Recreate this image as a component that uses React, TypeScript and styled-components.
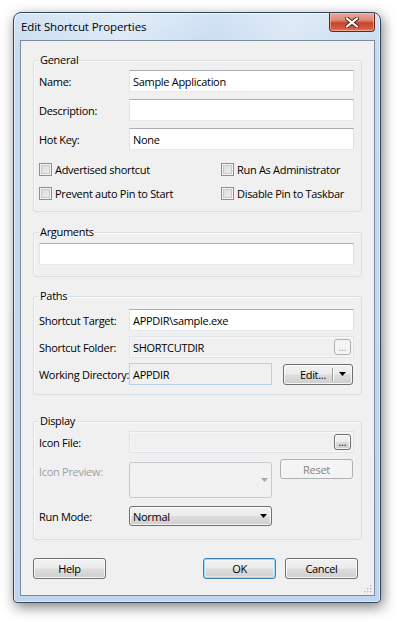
import React from 'react';
import styled, { createGlobalStyle, css } from 'styled-components';

const Global = createGlobalStyle`
  html, body { margin: 0; padding: 0; background: #ffffff; }
  body {
    font-family: "Open Sans", "Noto Sans", sans-serif;
    font-size: 11px;
    letter-spacing: -0.3px;
    line-height: 15px;
    color: #000;
  }
  * { box-sizing: border-box; }
`;

const Stage = styled.div`
  width: 400px;
  height: 622px;
  padding: 12px 0 0 13px;
`;

const Window = styled.div`
  position: relative;
  width: 368px;
  height: 591px;
  display: flex;
  flex-direction: column;
  border: 1px solid #34465c;
  border-radius: 8px 8px 4px 4px;
  background: linear-gradient(to bottom, #d3e3f4 0px, #c6dbf1 40px, #bdd5ee 100%);
  box-shadow: 2px 4px 13px rgba(0, 0, 0, 0.5), inset 0 0 0 1px rgba(255, 255, 255, 0.55);
  padding: 0 5px 6px 6px;
`;

const TitleBar = styled.div`
  height: 27px;
  display: flex;
  justify-content: space-between;
  align-items: flex-start;
  margin: 0 -5px 0 -6px;
  padding: 0 5px 0 6px;
  border-radius: 7px 7px 0 0;
  background: linear-gradient(100deg, rgba(255,255,255,0.0) 0%, rgba(255,255,255,0.35) 30%, rgba(255,255,255,0.0) 55%, rgba(255,255,255,0.3) 75%, rgba(255,255,255,0) 100%);
`;

const Title = styled.div`
  font-size: 11.5px;
  letter-spacing: -0.1px;
  line-height: 27px;
  padding-left: 1px;
  color: #000;
`;

const CloseButton = styled.div`
  width: 46px;
  height: 19px;
  display: flex;
  align-items: center;
  justify-content: center;
  border: 1px solid #6b2218;
  border-top: none;
  border-radius: 0 0 4px 4px;
  background: linear-gradient(to bottom, #e9a899 0%, #dc8a78 40%, #c9452d 55%, #d35a3f 85%, #e6836a 100%);
  box-shadow: inset 0 0 0 1px rgba(255, 200, 180, 0.55);
`;

const Client = styled.div`
  position: relative;
  flex: 1;
  display: flex;
  flex-direction: column;
  background: #f0f0f0;
  border: 1px solid #7d8a9b;
  padding: 0 12px;
`;

const Group = styled.fieldset<{ $top: number; $pt: number; $pb: number }>`
  margin: ${(p) => p.$top}px 0 0 0;
  padding: ${(p) => p.$pt}px 7px ${(p) => p.$pb}px 5px;
  border: 1px solid #d5dfe5;
  border-radius: 3px;
  box-shadow: inset 1px 1px 0 #fbfbfb;
  min-width: 0;
`;

const Legend = styled.legend`
  padding: 0 1px;
  margin-left: 0;
  font-size: 11px;
  line-height: 16px;
  color: #000;
`;

const Stack = styled.div<{ $gap: number }>`
  display: flex;
  flex-direction: column;
  gap: ${(p) => p.$gap}px;
`;

const FormRow = styled.div<{ $cols?: string; $align?: string; $mt?: number }>`
  display: grid;
  grid-template-columns: ${(p) => p.$cols ?? '90px 1fr'};
  align-items: ${(p) => p.$align ?? 'center'};
  margin-top: ${(p) => p.$mt ?? 0}px;
`;

const Label = styled.span<{ $disabled?: boolean; $pt?: number }>`
  color: ${(p) => (p.$disabled ? '#a0a0a0' : '#000')};
  white-space: nowrap;
  overflow: hidden;
  padding-top: ${(p) => p.$pt ?? 0}px;
`;

type FieldVariant = 'normal' | 'disabled' | 'readonly';

const Field = styled.div<{ $variant?: FieldVariant; $h?: number }>`
  height: ${(p) => p.$h ?? 22}px;
  display: flex;
  align-items: center;
  justify-content: space-between;
  padding: 0 2px 0 3px;
  white-space: nowrap;
  overflow: hidden;
  ${(p) =>
    p.$variant === 'disabled'
      ? css`
          background: #f0f0f0;
          border: 1px solid #dde3e8;
          box-shadow: inset 0 0 0 1px #f7f7f7;
        `
      : p.$variant === 'readonly'
      ? css`
          background: #f0f0f0;
          border: 1px solid #b6d0ea;
        `
      : css`
          background: #ffffff;
          border: 1px solid;
          border-color: #abadb3 #dbdfe6 #e3e9ef #e2e3ea;
        `}
`;

const buttonFace = css`
  border: 1px solid #707070;
  border-radius: 3px;
  background: linear-gradient(to bottom, #f2f2f2 0%, #ebebeb 48%, #dddddd 52%, #cfcfcf 100%);
  box-shadow: inset 0 0 0 1px rgba(255, 255, 255, 0.75);
`;

const disabledFace = css`
  border: 1px solid #adb2b5;
  border-radius: 3px;
  background: #f4f4f4;
  color: #838383;
`;

const PushButton = styled.div<{ $default?: boolean; $disabled?: boolean; $w?: number; $h?: number; $ml?: number }>`
  width: ${(p) => p.$w ?? 73}px;
  height: ${(p) => p.$h ?? 21}px;
  margin-left: ${(p) => p.$ml ?? 0}px;
  display: flex;
  align-items: center;
  justify-content: center;
  color: #000;
  ${(p) => (p.$disabled ? disabledFace : buttonFace)}
  ${(p) =>
    p.$default &&
    css`
      border-color: #3c7fb1;
      box-shadow: inset 0 0 0 1px #9edcfb, inset 0 0 0 2px rgba(255, 255, 255, 0.4);
    `}
`;

const MiniButton = styled.div<{ $disabled?: boolean }>`
  width: 17px;
  height: 16px;
  flex: none;
  display: flex;
  align-items: flex-end;
  justify-content: center;
  font-size: 10px;
  line-height: 12px;
  letter-spacing: 0;
  padding-bottom: 1px;
  ${(p) => (p.$disabled ? disabledFace : buttonFace)}
  color: ${(p) => (p.$disabled ? '#9a9a9a' : '#000')};
`;

const SplitButton = styled.div`
  width: 70px;
  height: 21px;
  margin-left: 11px;
  display: flex;
  align-items: center;
  ${buttonFace}
`;

const SplitMain = styled.span`
  flex: 1;
  text-align: right;
  padding-right: 6px;
`;

const SplitDivider = styled.span`
  width: 1px;
  height: 13px;
  background: #9a9a9a;
  box-shadow: 1px 0 0 #fff;
`;

const SplitArrow = styled.span`
  width: 19px;
  display: flex;
  justify-content: center;
`;

const ComboBox = styled.div`
  height: 20px;
  display: flex;
  align-items: center;
  justify-content: space-between;
  padding: 0 4px 0 3px;
  ${buttonFace}
`;

const PreviewBox = styled.div`
  height: 36px;
  margin-top: 3px;
  display: flex;
  align-items: center;
  justify-content: flex-end;
  padding-right: 3px;
  border: 1px solid #c5c9cc;
  border-radius: 3px;
  background: #f2f2f2;
`;

const CheckGrid = styled.div`
  display: grid;
  grid-template-columns: 182px 1fr;
  row-gap: 7px;
  margin-top: 4px;
`;

const CheckItem = styled.label`
  height: 17px;
  display: flex;
  align-items: center;
  gap: 3px;
  white-space: nowrap;
`;

const CheckBox = styled.span`
  width: 13px;
  height: 13px;
  flex: none;
  border: 1px solid #8e8f8f;
  background: linear-gradient(135deg, #d7d7d7 0%, #f1f1f1 100%);
  box-shadow: inset 0 0 0 1px #f4f4f4, inset 0 0 0 2px #c9c9c9;
`;

const Footer = styled.div`
  display: flex;
  justify-content: space-between;
  margin-top: 18px;
  padding-right: 4px;
`;

const ButtonPair = styled.div`
  display: flex;
  gap: 9px;
`;

const Grip = styled.svg`
  position: absolute;
  right: 2px;
  bottom: 2px;
`;

const Arrow = ({ color = '#000' }: { color?: string }) => (
  <svg width="7" height="4" viewBox="0 0 7 4">
    <path d="M0 0 H7 L3.5 4 Z" fill={color} />
  </svg>
);

const CloseX = () => (
  <svg width="14" height="11" viewBox="0 0 14 11">
    <path d="M2 1.5 L12 9.5 M12 1.5 L2 9.5" stroke="#4a1d16" strokeWidth="4" strokeLinecap="square" />
    <path d="M2 1.5 L12 9.5 M12 1.5 L2 9.5" stroke="#ffffff" strokeWidth="2.2" strokeLinecap="square" />
  </svg>
);

const Check = ({ children }: { children: React.ReactNode }) => (
  <CheckItem>
    <CheckBox />
    <span>{children}</span>
  </CheckItem>
);

export default function App() {
  return (
    <Stage>
      <Global />
      <Window>
        <TitleBar>
          <Title>Edit Shortcut Properties</Title>
          <CloseButton>
            <CloseX />
          </CloseButton>
        </TitleBar>
        <Client>
          <Group $top={11} $pt={2} $pb={9}>
            <Legend>General</Legend>
            <Stack $gap={7}>
              <FormRow>
                <Label>Name:</Label>
                <Field>Sample Application</Field>
              </FormRow>
              <FormRow>
                <Label>Description:</Label>
                <Field />
              </FormRow>
              <FormRow>
                <Label>Hot Key:</Label>
                <Field>None</Field>
              </FormRow>
              <CheckGrid>
                <Check>Advertised shortcut</Check>
                <Check>Run As Administrator</Check>
                <Check>Prevent auto Pin to Start</Check>
                <Check>Disable Pin to Taskbar</Check>
              </CheckGrid>
            </Stack>
          </Group>

          <Group $top={12} $pt={3} $pb={11}>
            <Legend>Arguments</Legend>
            <Field />
          </Group>

          <Group $top={11} $pt={5} $pb={9}>
            <Legend>Paths</Legend>
            <Stack $gap={5}>
              <FormRow>
                <Label>Shortcut Target:</Label>
                <Field>APPDIR\sample.exe</Field>
              </FormRow>
              <FormRow>
                <Label>Shortcut Folder:</Label>
                <Field $variant="disabled">
                  <span>SHORTCUTDIR</span>
                  <MiniButton $disabled>...</MiniButton>
                </Field>
              </FormRow>
              <FormRow $cols="90px 143px auto">
                <Label>Working Directory:</Label>
                <Field $variant="readonly">APPDIR</Field>
                <SplitButton>
                  <SplitMain>Edit...</SplitMain>
                  <SplitDivider />
                  <SplitArrow>
                    <Arrow />
                  </SplitArrow>
                </SplitButton>
              </FormRow>
            </Stack>
          </Group>

          <Group $top={18} $pt={2} $pb={13}>
            <Legend>Display</Legend>
            <Stack $gap={6}>
              <FormRow>
                <Label>Icon File:</Label>
                <Field $variant="disabled">
                  <span />
                  <MiniButton>...</MiniButton>
                </Field>
              </FormRow>
              <FormRow $cols="90px 143px auto" $align="start">
                <Label $disabled $pt={5}>Icon Preview:</Label>
                <PreviewBox>
                  <Arrow color="#a8a8a8" />
                </PreviewBox>
                <PushButton $disabled $ml={8} $h={20}>
                  Reset
                </PushButton>
              </FormRow>
              <FormRow $cols="90px 143px" $mt={2}>
                <Label>Run Mode:</Label>
                <ComboBox>
                  <span>Normal</span>
                  <Arrow />
                </ComboBox>
              </FormRow>
            </Stack>
          </Group>

          <Footer>
            <PushButton>Help</PushButton>
            <ButtonPair>
              <PushButton $default>OK</PushButton>
              <PushButton>Cancel</PushButton>
            </ButtonPair>
          </Footer>
          <Grip width="9" height="9" viewBox="0 0 9 9">
            {[
              [7, 1],
              [7, 4],
              [4, 4],
              [7, 7],
              [4, 7],
              [1, 7],
            ].map(([x, y], i) => (
              <g key={i}>
                <rect x={x + 1} y={y + 1} width="1.5" height="1.5" fill="#ffffff" />
                <rect x={x} y={y} width="1.5" height="1.5" fill="#b8bcc2" />
              </g>
            ))}
          </Grip>
        </Client>
      </Window>
    </Stage>
  );
}
